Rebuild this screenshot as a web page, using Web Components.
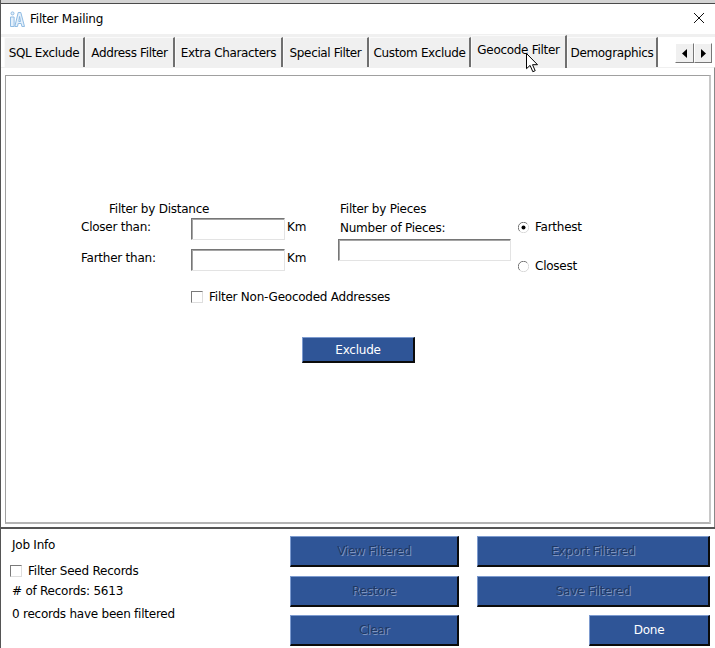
<!DOCTYPE html>
<html>
<head>
<meta charset="utf-8">
<title>Filter Mailing</title>
<style>
  html, body { margin: 0; padding: 0; background: #fff; }
  body { font: 12px "DejaVu Sans", sans-serif; color: #000; overflow: hidden; }
</style>
</head>
<body>
<filter-window></filter-window>
<script>
const FONT = `font-family: "DejaVu Sans", sans-serif; font-size: 12px; letter-spacing: -0.24px;`;

class TitleBar extends HTMLElement {
  connectedCallback() {
    this.attachShadow({ mode: 'open' });
    this.shadowRoot.innerHTML = `
      <style>
        :host { display: flex; align-items: center; height: 30px; padding: 0 9px 0 9px; background: #fff; }
        svg.logo { width: 15px; height: 16px; margin-right: 5px; }
        span { flex: 1; ${FONT} }
        svg.close { width: 12px; height: 12px; margin-right: 1px; margin-top: -2px; }
      </style>
      <svg class="logo" viewBox="0 0 15 16" fill="#e4f0fb" stroke="#8fbbe3" stroke-width="1">
        <circle cx="2.5" cy="2.4" r="1.5"/>
        <path d="M.5 6h3.6v9.5H.5z"/>
        <path d="M4.8 15.5L8.2 1.5h2.6l3.7 14h-2.6l-.7-3H8.2l-.7 3zM8.8 10.5h1.7L9.6 5.5z"/>
      </svg>
      <span>Filter Mailing</span>
      <svg class="close" viewBox="0 0 12 12" stroke="#111" stroke-width="1" fill="none"><path d="M1 1l10 10M11 1L1 11"/></svg>
    `;
  }
}

class TabItem extends HTMLElement {
  connectedCallback() {
    this.attachShadow({ mode: 'open' });
    this.shadowRoot.innerHTML = `
      <style>
        :host { display: flex; justify-content: center; align-items: center; box-sizing: border-box; height: 30px; background: #f0f0f0;
          border-top: 1px solid #fafafa; border-left: 1px solid #fafafa; border-right: 2px solid #6f6f6f; border-top-left-radius: 2px; ${FONT} letter-spacing: -0.35px; white-space: nowrap; }
        :host([active]) { height: 33px; margin-top: -2px; padding-bottom: 4px; letter-spacing: -0.3px; }
      </style>
      <slot></slot>
    `;
  }
}

class TabStrip extends HTMLElement {
  connectedCallback() {
    this.attachShadow({ mode: 'open' });
    this.shadowRoot.innerHTML = `
      <style>
        :host { display: flex; height: 33px; box-sizing: border-box; padding: 0 0 0 3px; background: #fff; border-top: 3px solid #f0f0f0; }
        .arrows { display: flex; margin: 6px 0 0 17px; height: 20px; }
        .arrows b { width: 19px; height: 20px; box-sizing: border-box; background: #f0f0f0; border-right: 1px solid #777; border-bottom: 1px solid #777; border-top: 1px solid #fff; border-left: 1px solid #fff;
          display: flex; align-items: center; justify-content: center; }
        .arrows b + b { width: 18px; }
        svg { width: 5px; height: 9px; }
      </style>
      <slot></slot>
      <div class="arrows">
        <b><svg viewBox="0 0 5 9"><path d="M5 0v9L0 4.5z"/></svg></b>
        <b><svg viewBox="0 0 5 9"><path d="M0 0v9l5-4.5z"/></svg></b>
      </div>
    `;
  }
}

class TextField extends HTMLElement {
  connectedCallback() {
    this.attachShadow({ mode: 'open' });
    this.shadowRoot.innerHTML = `
      <style>
        :host { display: block; box-sizing: border-box; height: 22px; background: #fff;
          border-top: 1px solid #767676; border-left: 1px solid #767676; border-right: 1px solid #e3e3e3; border-bottom: 1px solid #e3e3e3; box-shadow: inset 0 1px 0 #a5a5a5, inset 1px 0 0 #a5a5a5; }
      </style>
    `;
  }
}

class CheckMark extends HTMLElement {
  connectedCallback() {
    this.attachShadow({ mode: 'open' });
    this.shadowRoot.innerHTML = `
      <style>
        :host { display: flex; align-items: center; ${FONT} }
        i { width: 10px; height: 10px; flex: none; background: #fff; border: 1px solid #7a7a7a; border-right-color: #dedede; border-bottom-color: #dedede; margin-right: 6px; }
      </style>
      <i></i><slot></slot>
    `;
  }
}

class RadioOption extends HTMLElement {
  connectedCallback() {
    this.attachShadow({ mode: 'open' });
    this.shadowRoot.innerHTML = `
      <style>
        :host { display: flex; align-items: center; ${FONT} }
        svg { width: 11px; height: 11px; margin-right: 6px; flex: none; }
      </style>
      <svg viewBox="0 0 11 11">
        <path d="M9.2 1.8A5 5 0 0 0 1.8 9.2" fill="none" stroke="#707070"/>
        <path d="M1.8 9.2A5 5 0 0 0 9.2 1.8" fill="none" stroke="#d8d8d8"/>
        ${this.hasAttribute('checked') ? '<circle cx="5.5" cy="5.5" r="2" fill="#000"/>' : ''}
      </svg>
      <slot></slot>
    `;
  }
}

class BlueButton extends HTMLElement {
  connectedCallback() {
    this.attachShadow({ mode: 'open' });
    this.shadowRoot.innerHTML = `
      <style>
        :host { display: flex; align-items: center; justify-content: center; box-sizing: border-box; height: 31px; background: #2f5597; color: #fff;
          border-top: 1px solid #7d9bcf; border-left: 1px solid #7d9bcf; border-right: 2px solid #0b0b0b; border-bottom: 2px solid #0b0b0b; ${FONT} }
        :host([disabled]) { color: #1f3864; text-shadow: 1px 1px 0 #7f95bf; }
      </style>
      <slot></slot>
    `;
  }
}

class GeocodePanel extends HTMLElement {
  connectedCallback() {
    this.attachShadow({ mode: 'open' });
    this.shadowRoot.innerHTML = `
      <style>
        :host { display: flex; flex-direction: column; box-sizing: border-box; height: 460px; padding: 7px 3px 3px 4px; background: #fff;
          border-top: 1px solid #f0f0f0; border-right: 1px solid #8a8a8a; ${FONT} }
        .frame { flex: 1; box-sizing: border-box; border: 1px solid #a0a0a0; border-right: 2px solid #c8c8c8; border-bottom: 2px solid #b4b4b4; display: flex; flex-direction: column; padding: 126px 0 0 75px; }
        .top { display: flex; }
        .distance { width: 257px; }
        .distance h4 { font: inherit; margin: 0 0 2px 28px; height: 14px; line-height: 14px; }
        .row { display: grid; grid-template-columns: 110px 94px auto; align-items: start; height: 22px; margin-bottom: 9px; }
        .row span { line-height: 16px; padding-top: 1px; }
        .row span:last-child { padding-left: 2px; }
        .check { margin: 16px 0 0 110px; white-space: nowrap; height: 20px; }
        .pieces { width: 173px; margin-right: 7px; }
        .pieces div { height: 14px; line-height: 14px; margin-left: 2px; }
        .pieces div + div { margin-top: 5px; margin-bottom: 4px; }
        .radios { display: flex; flex-direction: column; gap: 25px; padding-top: 18px; }
        .exclude { width: 113px; height: 26px; align-self: flex-start; margin: 30px 0 0 221px; }
      </style>
      <div class="frame">
        <div class="top">
          <div class="distance">
            <h4>Filter by Distance</h4>
            <div class="row"><span>Closer than:</span><text-field></text-field><span>Km</span></div>
            <div class="row"><span>Farther than:</span><text-field></text-field><span>Km</span></div>
            <check-mark class="check">Filter Non-Geocoded Addresses</check-mark>
          </div>
          <div class="pieces">
            <div>Filter by Pieces</div>
            <div>Number of Pieces:</div>
            <text-field></text-field>
          </div>
          <div class="radios">
            <radio-option checked>Farthest</radio-option>
            <radio-option>Closest</radio-option>
          </div>
        </div>
        <blue-button class="exclude">Exclude</blue-button>
      </div>
    `;
  }
}

class JobFooter extends HTMLElement {
  connectedCallback() {
    this.attachShadow({ mode: 'open' });
    this.shadowRoot.innerHTML = `
      <style>
        :host { display: flex; box-sizing: border-box; height: 121px; border-top: 2px solid #555; background: #fff; padding: 7px 5px 0 0; ${FONT} }
        .info { width: 289px; padding-left: 11px; padding-top: 1px; box-sizing: border-box; }
        .info p { margin: 0; line-height: 16px; }
        .seed { margin: 11px 0 5px -2px; height: 14px; }
        .buttons { display: grid; grid-template-columns: 169px 233px; column-gap: 18px; grid-template-rows: 32px 31px 31px; row-gap: 8px; align-items: start; }
        .done { width: 121px; justify-self: end; }
      </style>
      <div class="info">
        <p>Job Info</p>
        <check-mark class="seed">Filter Seed Records</check-mark>
        <p>&#35; of Records: 5613</p>
        <p style="margin-top:7px">0 records have been filtered</p>
      </div>
      <div class="buttons">
        <blue-button disabled>View Filtered</blue-button>
        <blue-button disabled>Export Filtered</blue-button>
        <blue-button disabled>Restore</blue-button>
        <blue-button disabled>Save Filtered</blue-button>
        <blue-button disabled>Clear</blue-button>
        <blue-button class="done">Done</blue-button>
      </div>
    `;
  }
}

class FilterWindow extends HTMLElement {
  connectedCallback() {
    this.attachShadow({ mode: 'open' });
    this.shadowRoot.innerHTML = `
      <style>
        :host { display: block; position: relative; box-sizing: border-box; width: 715px; height: 648px; padding-top: 4px; border-left: 1px solid #555;
          background: linear-gradient(#d4d4d4 3px, #4a4a4a 3px, #4a4a4a 4px, #fff 4px); }
        .cursor { position: absolute; left: 525px; top: 53px; width: 14px; height: 20px; }
      </style>
      <title-bar></title-bar>
      <tab-strip>
        <tab-item style="width:81px">SQL Exclude</tab-item>
        <tab-item style="width:90px">Address Filter</tab-item>
        <tab-item style="width:108px">Extra Characters</tab-item>
        <tab-item style="width:86px">Special Filter</tab-item>
        <tab-item style="width:102px">Custom Exclude</tab-item>
        <tab-item active style="width:96px">Geocode Filter</tab-item>
        <tab-item style="width:91px">Demographics</tab-item>
      </tab-strip>
      <geocode-panel></geocode-panel>
      <job-footer></job-footer>
      <svg class="cursor" viewBox="0 0 14 20"><path d="M.5.5v15.2l3.6-3.3 2.7 6.3 2.4-1-2.7-6h5z" fill="#fff" stroke="#000" stroke-width="1"/></svg>
    `;
  }
}

customElements.define('title-bar', TitleBar);
customElements.define('tab-item', TabItem);
customElements.define('tab-strip', TabStrip);
customElements.define('text-field', TextField);
customElements.define('check-mark', CheckMark);
customElements.define('radio-option', RadioOption);
customElements.define('blue-button', BlueButton);
customElements.define('geocode-panel', GeocodePanel);
customElements.define('job-footer', JobFooter);
customElements.define('filter-window', FilterWindow);
</script>
</body>
</html>
